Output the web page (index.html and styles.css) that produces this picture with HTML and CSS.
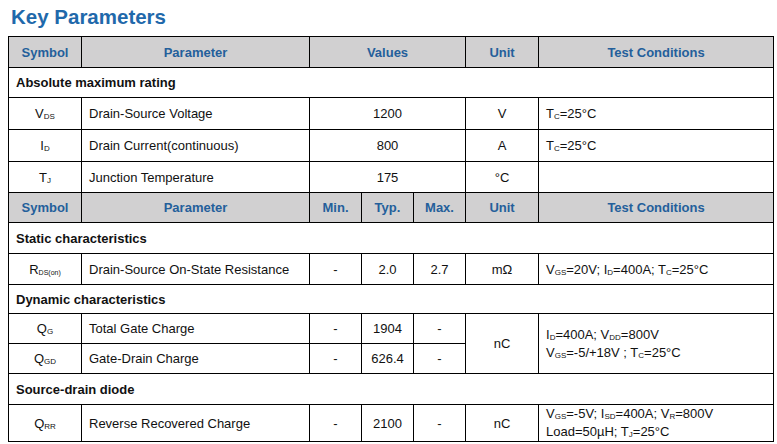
FILE: index.html
```html
<!DOCTYPE html>
<html>
<head>
<meta charset="utf-8">
<link rel="stylesheet" href="styles.css">
</head>
<body>
<h1 class="title">Key Parameters</h1>
<table class="params">
  <colgroup>
    <col class="c-sym"><col class="c-par"><col class="c-min"><col class="c-typ"><col class="c-max"><col class="c-unit"><col class="c-cond">
  </colgroup>
  <tr class="head r31">
    <th>Symbol</th><th>Parameter</th><th colspan="3">Values</th><th>Unit</th><th>Test Conditions</th>
  </tr>
  <tr class="group r30"><td colspan="7">Absolute maximum rating</td></tr>
  <tr class="r32">
    <td class="ctr">V<sub>DS</sub></td><td class="left">Drain-Source Voltage</td><td colspan="3" class="ctr">1200</td><td class="ctr">V</td><td class="left">T<sub>C</sub>=25°C</td>
  </tr>
  <tr class="r32">
    <td class="ctr">I<sub>D</sub></td><td class="left">Drain Current(continuous)</td><td colspan="3" class="ctr">800</td><td class="ctr">A</td><td class="left">T<sub>C</sub>=25°C</td>
  </tr>
  <tr class="r31">
    <td class="ctr">T<sub>J</sub></td><td class="left">Junction Temperature</td><td colspan="3" class="ctr">175</td><td class="ctr">°C</td><td class="left"></td>
  </tr>
  <tr class="head r30">
    <th>Symbol</th><th>Parameter</th><th>Min.</th><th>Typ.</th><th>Max.</th><th>Unit</th><th>Test Conditions</th>
  </tr>
  <tr class="group r31"><td colspan="7">Static characteristics</td></tr>
  <tr class="r31">
    <td class="ctr">R<sub class="tiny">DS(on)</sub></td><td class="left">Drain-Source On-State Resistance</td><td class="ctr">-</td><td class="ctr">2.0</td><td class="ctr">2.7</td><td class="ctr">mΩ</td><td class="left">V<sub>GS</sub>=20V; I<sub>D</sub>=400A; T<sub>C</sub>=25°C</td>
  </tr>
  <tr class="group r29"><td colspan="7">Dynamic characteristics</td></tr>
  <tr class="r30">
    <td class="ctr">Q<sub>G</sub></td><td class="left">Total Gate Charge</td><td class="ctr">-</td><td class="ctr">1904</td><td class="ctr">-</td><td class="ctr" rowspan="2">nC</td><td class="left two" rowspan="2">I<sub>D</sub>=400A; V<sub>DD</sub>=800V<br>V<sub>GS</sub>=-5/+18V ; T<sub>C</sub>=25°C</td>
  </tr>
  <tr class="r30">
    <td class="ctr">Q<sub>GD</sub></td><td class="left">Gate-Drain Charge</td><td class="ctr">-</td><td class="ctr">626.4</td><td class="ctr">-</td>
  </tr>
  <tr class="group r31"><td colspan="7">Source-drain diode</td></tr>
  <tr class="r37">
    <td class="ctr">Q<sub>RR</sub></td><td class="left">Reverse Recovered Charge</td><td class="ctr">-</td><td class="ctr">2100</td><td class="ctr">-</td><td class="ctr">nC</td><td class="left two">V<sub>GS</sub>=-5V; I<sub>SD</sub>=400A; V<sub>R</sub>=800V<br>Load=50µH; T<sub>J</sub>=25°C</td>
  </tr>
</table>
</body>
</html>
```

FILE: styles.css
```css
html, body {
  margin: 0;
  padding: 0;
  background: #ffffff;
}
body {
  font-family: "Liberation Sans", Arial, sans-serif;
  color: #111111;
}
.title {
  margin: 0;
  padding: 4px 0 0 11px;
  height: 32px;
  font-size: 20.5px;
  line-height: 26px;
  font-weight: bold;
  color: #1f69ab;
}
.params {
  margin-left: 8px;
  border-collapse: collapse;
  table-layout: fixed;
  width: 766px;
  font-size: 13px;
}
.c-sym { width: 73px; }
.c-par { width: 228px; }
.c-min { width: 52px; }
.c-typ { width: 52px; }
.c-max { width: 52px; }
.c-unit { width: 73px; }
.c-cond { width: 235px; }
.params th, .params td {
  border: 1px solid #000000;
  padding: 0;
  vertical-align: middle;
  white-space: nowrap;
}
.head th {
  background: #d1d0d1;
  color: #245f9b;
  font-weight: bold;
  text-align: center;
}
.group td {
  font-weight: bold;
  padding-left: 7px;
  text-align: left;
}
.ctr { text-align: center; }
.params td.left { text-align: left; padding-left: 7px; }
.params td.two { line-height: 18px; }
sub {
  font-size: 8px;
  vertical-align: -1px;
  line-height: 0;
}
sub.tiny { font-size: 7px; }
.r29 { height: 29px; }
.r30 { height: 30px; }
.r31 { height: 31px; }
.r32 { height: 32px; }
.r37 { height: 37px; }
```
